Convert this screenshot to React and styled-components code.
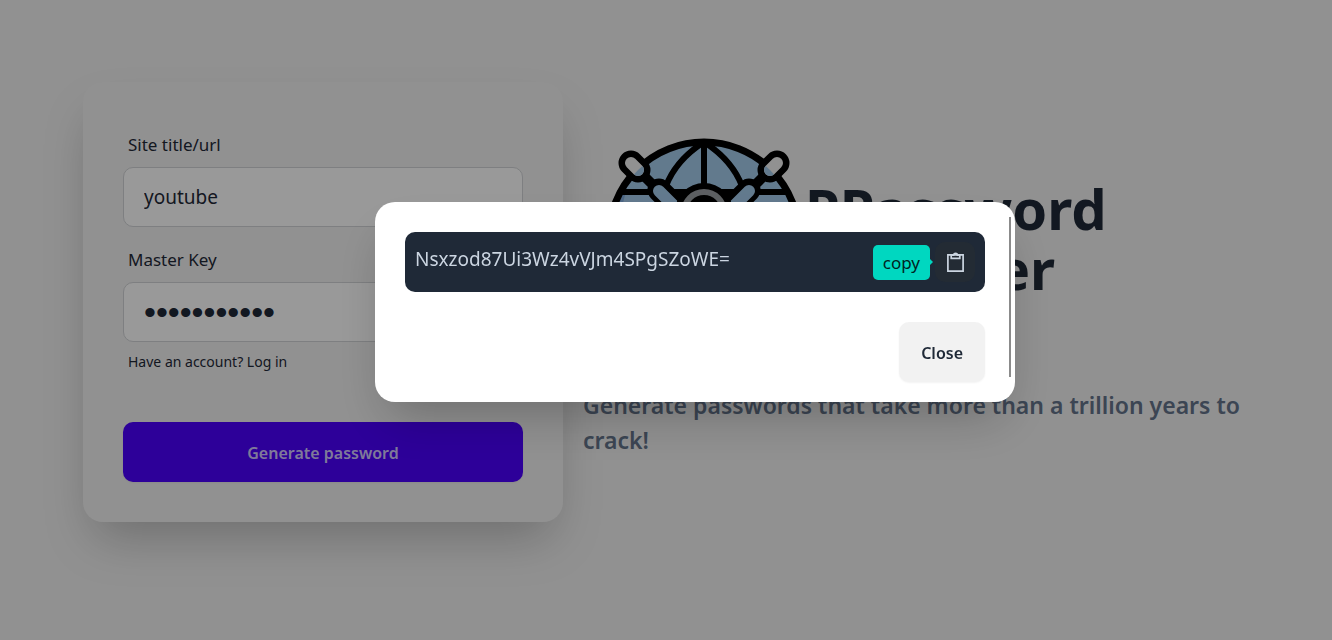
import React from "react";
import styled, { createGlobalStyle } from "styled-components";

const GlobalStyle = createGlobalStyle`
  *, *::before, *::after { box-sizing: border-box; }
  body {
    margin: 0;
    background: #f2f2f2;
    color: #1f2937;
    font-family: "Noto Sans", "Open Sans", sans-serif;
    font-size: 17px;
    line-height: 30px;
  }
  h1, p { margin: 0; }
  button, input { font: inherit; color: inherit; }
`;

const Hero = styled.main`
  min-height: 100vh;
  padding: 20px 20px 56px;
  display: flex;
  align-items: center;
  justify-content: center;
`;

const HeroContent = styled.div`
  width: 100%;
  max-width: 1166px;
  display: flex;
  align-items: center;
  gap: 20px;
`;

const Card = styled.form`
  flex: 0 0 480px;
  padding: 40px;
  border-radius: 20px;
  background: #f2f2f2;
  box-shadow: 0 25px 50px -12px rgba(0, 0, 0, 0.25);
  display: flex;
  flex-direction: column;
  gap: 10px;
`;

const Field = styled.div`
  display: flex;
  flex-direction: column;
`;

const Label = styled.label`
  padding: 10px 5px;
  font-size: 17px;
  line-height: 25px;
`;

const TextInput = styled.input`
  width: 100%;
  height: 60px;
  padding: 0 20px;
  border: 1px solid #d2d4d7;
  border-radius: 10px;
  background: #ffffff;
  font-size: 19px;
  outline: none;

  &[type="password"] {
    font-family: "Liberation Sans", Arial, sans-serif;
    font-size: 34px;
  }
`;

const LoginLink = styled.a`
  padding: 10px 5px;
  font-size: 14px;
  line-height: 20px;
  color: inherit;
  text-decoration: none;
`;

const Button = styled.button`
  height: 60px;
  padding: 2px 22px 0;
  border: 0;
  border-radius: 10px;
  font-size: 16px;
  font-weight: 600;
  cursor: pointer;
  background: ${(p) => (p.$primary ? "#4b00ff" : "#f2f2f2")};
  color: ${(p) => (p.$primary ? "#d4cbff" : "#1f2937")};
  margin-top: ${(p) => (p.$primary ? "30px" : "0")};
  box-shadow: 0 1px 2px rgba(0, 0, 0, 0.05);
`;

const Intro = styled.section`
  flex: 1;
  min-width: 0;
  padding-bottom: 8px;
`;

const Brand = styled.div`
  display: flex;
  align-items: center;
`;

const Logo = styled.svg`
  flex: none;
  width: 200px;
  height: 200px;
  margin-left: 20px;
`;

const Title = styled.h1`
  padding-left: 2px;
  font-size: 56px;
  line-height: 60px;
  font-weight: 700;
`;

const Tagline = styled.p`
  padding-top: 50px;
  color: #64748b;
  font-size: 23px;
  line-height: 35px;
  font-weight: 600;
`;

const Overlay = styled.div`
  position: fixed;
  inset: 0;
  padding: 0 0 36px 58px;
  display: flex;
  align-items: center;
  justify-content: center;
  background: rgba(0, 0, 0, 0.4);
`;

const ModalBox = styled.div`
  position: relative;
  width: 640px;
  max-width: 92%;
  padding: 30px 30px 20px;
  border-radius: 20px;
  background: #ffffff;
  box-shadow: 0 25px 50px -12px rgba(0, 0, 0, 0.25);
`;

const ScrollThumb = styled.span`
  position: absolute;
  top: 15px;
  bottom: 25px;
  right: 4px;
  width: 2px;
  background: #8b8b8b;
`;

const PasswordBar = styled.div`
  padding: 10px;
  border-radius: 10px;
  background: #1f2937;
  color: #cbd5e1;
  display: flex;
  justify-content: space-between;
  align-items: flex-start;
`;

const Password = styled.output`
  font-size: 19px;
  line-height: 35px;
`;

const CopyGroup = styled.div`
  position: relative;
  display: flex;
`;

const Tooltip = styled.span`
  position: absolute;
  right: calc(100% + 5px);
  top: 3px;
  padding: 5px 10px;
  border-radius: 5px;
  background: #00d7c0;
  color: #00241f;
  font-size: 17px;
  line-height: 25px;

  &::after {
    content: "";
    position: absolute;
    left: 100%;
    top: 14px;
    border: 3px solid transparent;
    border-left-color: #00d7c0;
    border-right-width: 0;
  }
`;

const IconButton = styled.button`
  width: 40px;
  height: 40px;
  padding: 0;
  border: 0;
  border-radius: 10px;
  background: #232b34;
  color: #cbd5e1;
  display: grid;
  place-items: center;
  cursor: pointer;
`;

const ModalActions = styled.div`
  margin-top: 30px;
  display: flex;
  justify-content: flex-end;
`;

function HelmLogo() {
  return (
    <Logo viewBox="0 0 200 200" fill="none" role="img" aria-label="Ship helm">
      <defs>
        <clipPath id="globe">
          <circle cx="101" cy="99" r="94" />
        </clipPath>
      </defs>
      <circle cx="101" cy="99" r="95" fill="#a4cbec" />
      <path d="M14 57h8l-4 16h-8z" fill="#7fa9dc" />
      <circle cx="101" cy="99" r="95" stroke="#000" strokeWidth="7" />
      <g stroke="#000" strokeWidth="6" clipPath="url(#globe)">
        <path d="M6 54h190M6 142h190M101 4v188" />
        <path d="M101 4Q73 22 63 48M101 4q28 18 38 44" />
      </g>
      <path d="M68 51h66v60H68z" fill="#000" />
      <path d="M76 58h1v2h-1zM125 58h1v2h-1z" stroke="#a4cbec" strokeWidth="1" />
      <path d="M28 25 101 98 174 25M101 98 30 169M101 98l71 71" stroke="#000" strokeWidth="10" />
      <path d="M28 25l7 7M174 25l-7 7" stroke="#000" strokeWidth="25" strokeLinecap="round" />
      <path d="M28 25l7 7M174 25l-7 7" stroke="#f2f2f2" strokeWidth="12" strokeLinecap="round" />
      <path d="M28 25l7 7M174 25l-7 7" stroke="#a4cbec" strokeWidth="12" strokeLinecap="round" clipPath="url(#globe)" />
      <path d="M56 52l17 17M146 52l-17 17" stroke="#000" strokeWidth="23" strokeLinecap="round" />
      <path d="M56 53l14 14M146 53l-14 14" stroke="#a4cbec" strokeWidth="12" strokeLinecap="round" />
      <circle cx="101" cy="74" r="29" fill="#000" />
      <circle cx="101" cy="74" r="20" stroke="#9b9fa3" strokeWidth="6" />
    </Logo>
  );
}

function ClipboardIcon() {
  return (
    <svg width="24" height="24" viewBox="0 0 24 24" fill="none" stroke="currentColor" strokeWidth="1.7" aria-hidden="true">
      <path d="M4.9 4.9h15.2v16.2H4.9z" />
      <path d="M8.2 5.2h2.4a1.9 1.9 0 0 1 3.8 0h2.4v3.1H8.2z" />
    </svg>
  );
}

export default function App() {
  return (
    <>
      <GlobalStyle />
      <Hero>
        <HeroContent>
          <Card onSubmit={(e) => e.preventDefault()}>
            <Field>
              <Label htmlFor="site">Site title/url</Label>
              <TextInput id="site" type="text" defaultValue="youtube" />
            </Field>
            <Field>
              <Label htmlFor="master">Master Key</Label>
              <TextInput id="master" type="password" defaultValue="masterkey12" />
              <LoginLink href="#login">Have an account? Log in</LoginLink>
            </Field>
            <Button $primary type="submit">Generate password</Button>
          </Card>
          <Intro>
            <Brand>
              <HelmLogo />
              <Title>PPassword Manager</Title>
            </Brand>
            <Tagline>Generate passwords that take more than a trillion years to crack!</Tagline>
          </Intro>
        </HeroContent>
      </Hero>
      <Overlay>
        <ModalBox role="dialog" aria-modal="true" aria-label="Generated password">
          <PasswordBar>
            <Password>Nsxzod87Ui3Wz4vVJm4SPgSZoWE=</Password>
            <CopyGroup>
              <Tooltip role="tooltip">copy</Tooltip>
              <IconButton type="button" aria-label="copy">
                <ClipboardIcon />
              </IconButton>
            </CopyGroup>
          </PasswordBar>
          <ModalActions>
            <Button type="button">Close</Button>
          </ModalActions>
          <ScrollThumb />
        </ModalBox>
      </Overlay>
    </>
  );
}
